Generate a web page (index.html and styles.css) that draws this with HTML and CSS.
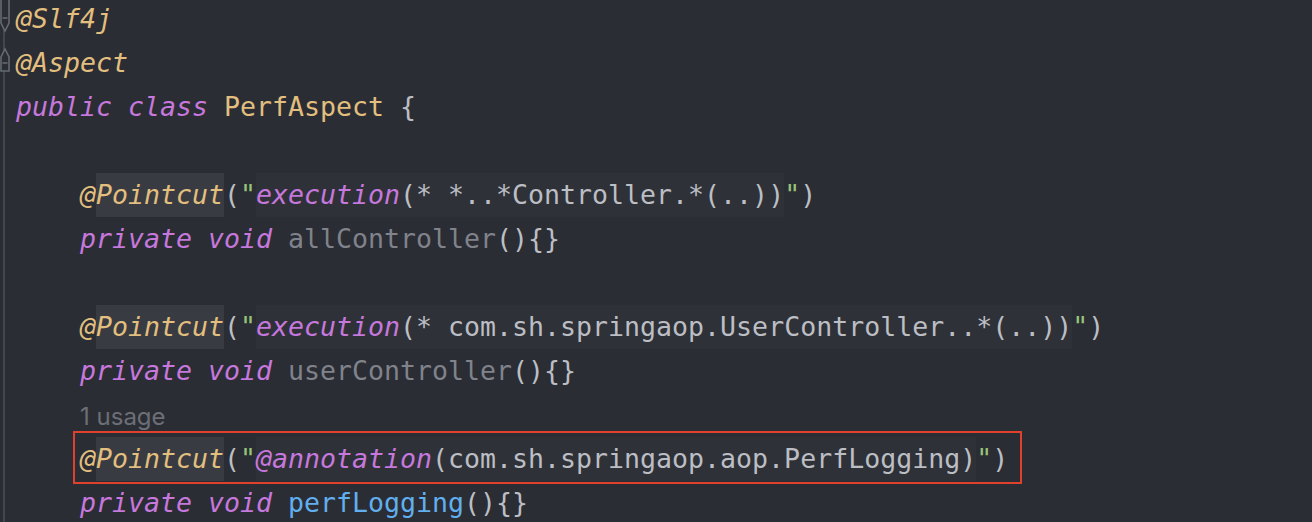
FILE: index.html
```html
<!DOCTYPE html>
<html>
<head>
<meta charset="utf-8">
<link rel="stylesheet" href="styles.css">
</head>
<body>
<div class="editor">
  <div class="gutter">
    <div class="grow">
      <svg width="12" height="44" viewBox="0 0 12 44">
        <path d="M1 0 V26 L5 34 L9 26 V0" fill="#2b2d34" stroke="#666971" stroke-width="1.6"/>
        <path d="M2.5 21 H7.5" stroke="#666971" stroke-width="1.6"/>
      </svg>
    </div>
    <div class="grow">
      <svg width="12" height="44" viewBox="0 0 12 44">
        <path d="M1 30 V16 L5 8 L9 16 V30 Z" fill="#2b2d34" stroke="#666971" stroke-width="1.6"/>
        <path d="M2.5 22 H7.5" stroke="#666971" stroke-width="1.6"/>
      </svg>
    </div>
  </div>
  <div class="code">
    <div class="line"><span class="ann">@Slf4j</span></div>
    <div class="line"><span class="ann">@Aspect</span></div>
    <div class="line"><span class="kw">public</span> <span class="kw">class</span> <span class="cls">PerfAspect</span> {</div>
    <div class="line"> </div>
    <div class="line">    <span class="ann">@<span class="hl">Pointcut</span></span>(<span class="q">"</span><span class="str"><span class="kw">execution</span>(* *..*Controller.*(..))</span><span class="q">"</span>)</div>
    <div class="line">    <span class="kw">private</span> <span class="kw">void</span> <span class="unused">allController</span>(){}</div>
    <div class="line"> </div>
    <div class="line">    <span class="ann">@<span class="hl">Pointcut</span></span>(<span class="q">"</span><span class="str"><span class="kw">execution</span>(* com.sh.springaop.UserController..*(..))</span><span class="q">"</span>)</div>
    <div class="line">    <span class="kw">private</span> <span class="kw">void</span> <span class="unused">userController</span>(){}</div>
    <div class="line">    <span class="hint">1 usage</span></div>
    <div class="line boxed">    <span class="ann">@<span class="hl">Pointcut</span></span>(<span class="q">"</span><span class="str"><span class="kw">@annotation</span>(com.sh.springaop.aop.PerfLogging)</span><span class="q">"</span>)<span class="redbox"></span></div>
    <div class="line">    <span class="kw">private</span> <span class="kw">void</span> <span class="meth">perfLogging</span>(){}</div>
  </div>
</div>
</body>
</html>
```

FILE: styles.css
```css
html, body {
  margin: 0;
  padding: 0;
  background: #2b2d34;
  overflow: hidden;
}
.editor {
  display: flex;
  margin-top: -3px;
  height: 540px;
}
.gutter {
  width: 16px;
  flex: none;
  display: flex;
  flex-direction: column;
  background: linear-gradient(to right, transparent 3px, #44464d 3px, #44464d 5px, transparent 5px);
}
.grow {
  height: 44px;
  display: flex;
}
.grow svg {
  display: block;
}
.code {
  flex: 1;
  font-family: "DejaVu Sans Mono", "Liberation Mono", monospace;
  font-size: 26.58px;
  color: #bcbec4;
}
.line {
  height: 44px;
  line-height: 44px;
  white-space: pre;
}
.boxed {
  position: relative;
}
.redbox {
  position: absolute;
  left: 57px;
  top: -6px;
  width: 949px;
  height: 53px;
  box-sizing: border-box;
  border: 2px solid #e0412c;
}
.ann {
  color: #e2bf7e;
  font-style: italic;
}
.cls {
  color: #e2bf7e;
}
.kw {
  color: #c678dd;
  font-style: italic;
}
.hl {
  background: #393b42;
  display: inline-block;
  height: 44px;
}
.str {
  background: #2f3138;
  display: inline-block;
  height: 44px;
}
.q {
  color: #98c379;
}
.unused {
  color: #80838b;
}
.meth {
  color: #61afef;
}
.hint {
  font-family: Inter, "Noto Sans", sans-serif;
  font-size: 24px;
  color: #6c6f76;
  position: relative;
  top: 1px;
}
```
